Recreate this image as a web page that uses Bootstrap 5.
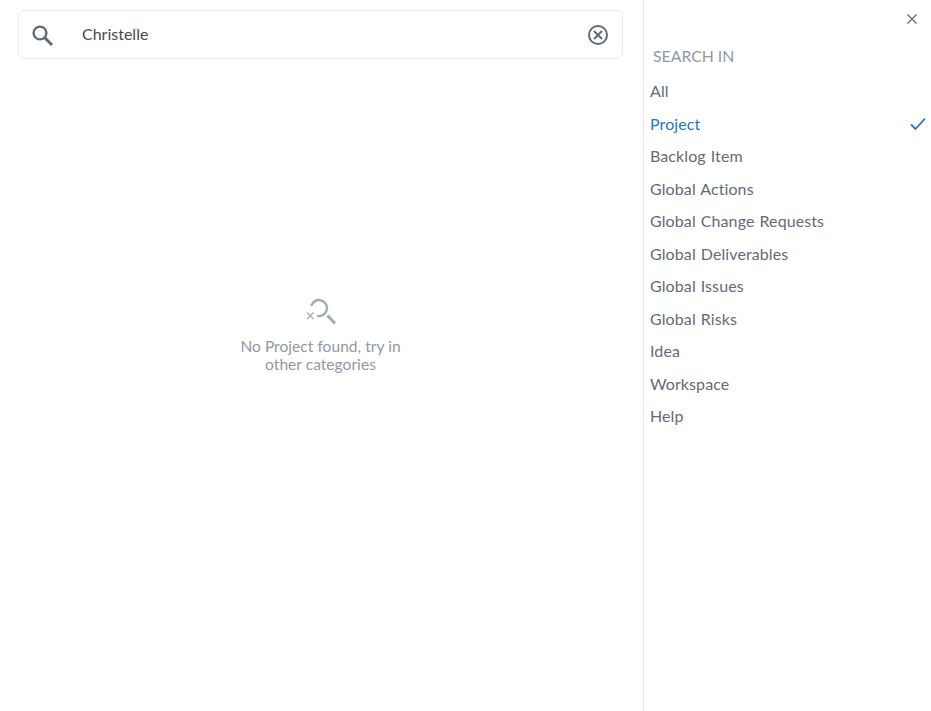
<!DOCTYPE html>
<html lang="en">
<head>
<meta charset="utf-8">
<title>Search</title>
<link rel="stylesheet" href="https://cdn.jsdelivr.net/npm/bootstrap@5.3.0/dist/css/bootstrap.min.css">
<style>
html, body { height: 711px; overflow: hidden; }
body { font-family: "Lato", "Liberation Sans", sans-serif; color: #5c6670; background: #fff; }
.search-pane { width: 643px; padding: 10px 20px 0 18px; }
.search-box { height: 49px; border: 1px solid #e9ebed; border-radius: 6px; padding: 0 13px 0 11px; }
.search-term { margin-left: 28px; padding-bottom: 2px; font-size: 16px; color: #454c53; }
.empty-note { flex: 1; padding-bottom: 338px; font-size: 15.500px; letter-spacing: .05px; line-height: 18px; color: #8f99a4; }
.empty-note svg { margin-bottom: 12px; }
.side-pane { width: 288px; border-left: 1px solid #e6e8ea; padding: 0 0 0 6px; }
.close-row { height: 38px; padding: 12px 12px 0 0; }
.side-title { margin: 0 0 8px 3px; padding: 7px 0 0; font-size: 15.800px; line-height: 22px; color: #8f99a4; font-weight: 400; }
.filter-item { height: 32.5px; font-size: 16px; line-height: 32.5px; color: #626c76; padding: 0 5px 0 0; background: transparent; border: 0; border-radius: 0; letter-spacing: .1px; word-spacing: .8px; }
.filter-item.is-active { color: #1f76c9; background: transparent; }
</style>
</head>
<body>
<div class="d-flex h-100">
  <main class="search-pane d-flex flex-column">
    <div class="search-box d-flex align-items-center">
      <svg width="24" height="24" viewBox="0 0 24 24" fill="none" stroke="#5f6b76" stroke-width="2.4" aria-hidden="true"><circle cx="10" cy="10" r="6.4"/><path d="M14.8 14.8 22 22" stroke-width="3"/></svg>
      <span class="search-term flex-grow-1">Christelle</span>
      <svg width="22" height="22" viewBox="0 0 22 22" fill="none" stroke="#5f6b76" stroke-width="2" aria-hidden="true"><circle cx="11" cy="11" r="9"/><path d="m7 7 8 8M15 7l-8 8"/></svg>
    </div>
    <div class="empty-note d-flex flex-column align-items-center justify-content-end text-center">
      <svg width="32" height="28" viewBox="0 0 32 28" fill="none" stroke="#a3adb8" aria-hidden="true"><path d="M6.300 9A8 8 0 1 1 12 18.800" stroke-width="2.400"/><path d="M22.500 18.500l7.500 8" stroke-width="3"/><path d="m2 15.500 6.500 6.500M8.500 15.500l-6.500 6.500" stroke-width="1.300"/></svg>
      <div>No Project found, try in<br>other categories</div>
    </div>
  </main>
  <aside class="side-pane">
    <div class="close-row d-flex justify-content-end">
      <svg width="14" height="14" viewBox="0 0 14 14" fill="none" stroke="#5f6b76" stroke-width="1.300" aria-hidden="true"><path d="m2.500 2.500 9 9M11.500 2.500l-9 9"/></svg>
    </div>
    <h2 class="side-title">SEARCH IN</h2>
    <div class="list-group list-group-flush">
      <div class="list-group-item filter-item">All</div>
      <div class="list-group-item filter-item is-active d-flex justify-content-between align-items-center">Project
        <svg width="16" height="14" viewBox="0 0 16 14" fill="none" stroke="#1f76c9" stroke-width="1.800" aria-hidden="true"><path d="m1 7.500 4.500 4.500L15 1.500"/></svg>
      </div>
      <div class="list-group-item filter-item">Backlog Item</div>
      <div class="list-group-item filter-item">Global Actions</div>
      <div class="list-group-item filter-item">Global Change Requests</div>
      <div class="list-group-item filter-item">Global Deliverables</div>
      <div class="list-group-item filter-item">Global Issues</div>
      <div class="list-group-item filter-item">Global Risks</div>
      <div class="list-group-item filter-item">Idea</div>
      <div class="list-group-item filter-item">Workspace</div>
      <div class="list-group-item filter-item">Help</div>
    </div>
  </aside>
</div>
<script src="https://cdn.jsdelivr.net/npm/bootstrap@5.3.0/dist/js/bootstrap.bundle.min.js"></script>
</body>
</html>
